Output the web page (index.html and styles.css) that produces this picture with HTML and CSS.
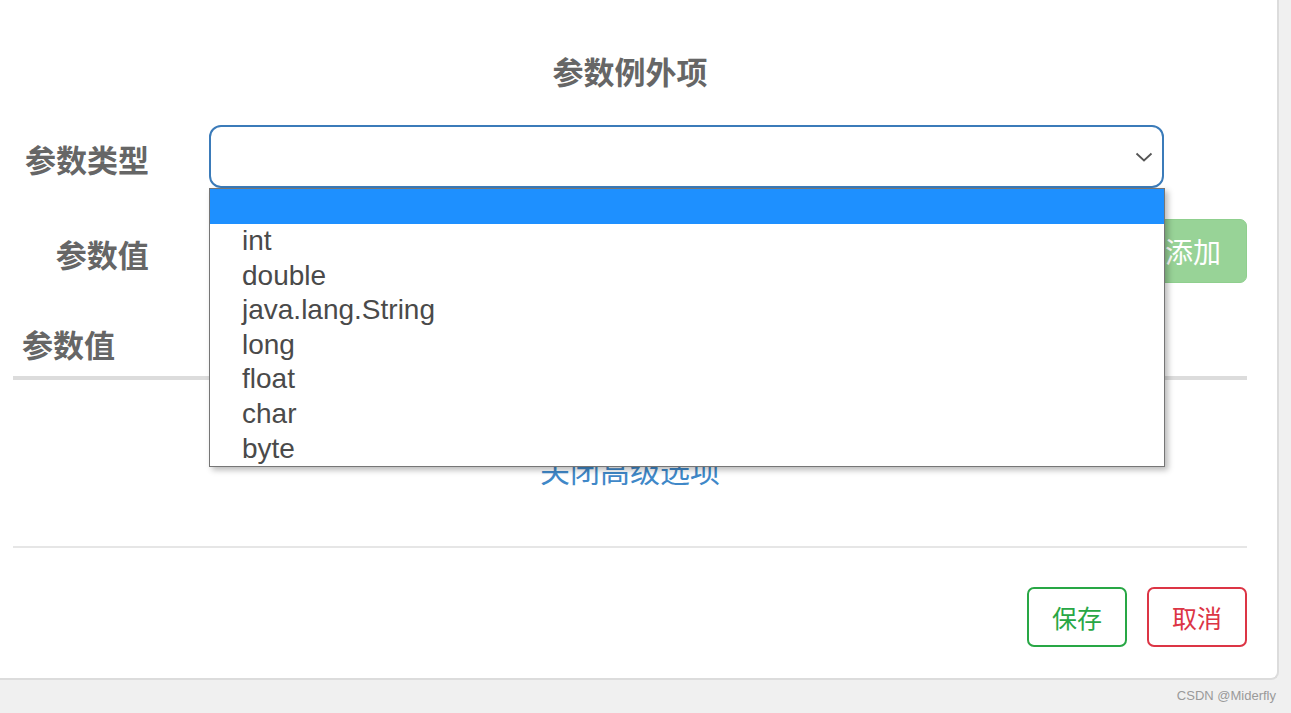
FILE: index.html
```html
<!DOCTYPE html>
<html lang="zh">
<head>
<meta charset="utf-8">
<title>参数例外项</title>
<link rel="stylesheet" href="styles.css">
</head>
<body>
<div class="page">
  <div class="panel">
    <h2 class="title">参数例外项</h2>

    <div class="row row-type">
      <label class="label">参数类型</label>
      <div class="select-wrap">
        <div class="select">
          <svg class="chevron" width="18" height="12" viewBox="0 0 18 12"><path d="M1.5 2.5 L9 9.5 L16.5 2.5" fill="none" stroke="#555" stroke-width="1.8"/></svg>
        </div>
        <ul class="options">
          <li class="opt selected">&nbsp;</li>
          <li class="opt">int</li>
          <li class="opt">double</li>
          <li class="opt">java.lang.String</li>
          <li class="opt">long</li>
          <li class="opt">float</li>
          <li class="opt">char</li>
          <li class="opt">byte</li>
        </ul>
      </div>
    </div>

    <div class="row row-value">
      <label class="label label-value">参数值</label>
      <div class="input"></div>
      <button class="btn-add">添加</button>
    </div>

    <h3 class="section">参数值</h3>

    <div class="link-row"><a class="link">关闭高级选项</a></div>

    <div class="divider"></div>

    <div class="actions">
      <button class="btn btn-save">保存</button>
      <button class="btn btn-cancel">取消</button>
    </div>
  </div>
  <div class="watermark">CSDN @Miderfly</div>
</div>
</body>
</html>
```

FILE: styles.css
```css
* { box-sizing: border-box; }
html, body { margin: 0; padding: 0; }
body {
  background: #f0f0f0;
  font-family: "Liberation Sans", "Noto Sans CJK SC", Arial, sans-serif;
  width: 1291px;
  height: 713px;
  overflow: hidden;
}
.page { width: 1291px; }
.panel {
  width: 1279px;
  height: 680px;
  background: #fff;
  border-right: 2px solid #dcdcdc;
  border-bottom: 2px solid #dcdcdc;
  border-bottom-right-radius: 8px;
  padding: 0 30px 0 13px;
}
.title {
  margin: 0;
  padding-top: 51px;
  font-size: 31px;
  line-height: 40px;
  font-weight: bold;
  color: #666;
  text-align: center;
  font-family: "Noto Sans CJK SC", sans-serif;
}
.row {
  display: flex;
  align-items: center;
}
.row-type { margin-top: 34px; height: 63px; }
.row-value { margin-top: 31px; height: 64px; }
.label {
  width: 136px;
  text-align: right;
  font-family: "Noto Sans CJK SC", sans-serif;
  font-size: 31px;
  line-height: 40px;
  font-weight: bold;
  color: #666;
  margin-right: 60px;
  margin-top: 5px;
}
.label-value { margin-top: 6px; }
.select-wrap {
  position: relative;
  width: 955px;
  height: 63px;
}
.select {
  height: 63px;
  border: 2px solid #3b7bb9;
  border-radius: 12px;
  background: #fff;
  display: flex;
  align-items: center;
  justify-content: flex-end;
  padding-right: 9px;
}
.chevron { margin-top: 1px; }
.options {
  position: absolute;
  left: 0;
  top: 63px;
  width: 956px;
  margin: 0;
  padding: 0;
  list-style: none;
  background: #fff;
  border: 1px solid #767676;
  box-shadow: 3px 3px 6px rgba(0,0,0,0.28);
  z-index: 10;
}
.opt {
  height: 34.6px;
  line-height: 33.6px;
  padding-left: 32px;
  font-size: 28px;
  color: #4a4a4a;
  font-family: "Liberation Sans", Arial, sans-serif;
}
.opt.selected { background: #1e90ff; height: 35px; }
.input {
  width: 931px;
  height: 64px;
  border: 2px solid #ccc;
  border-radius: 12px;
}
.btn-add {
  width: 108px;
  height: 64px;
  border: 1px solid #8fcf8e;
  border-radius: 7px;
  background: #98d397;
  color: #fff;
  font-family: "Noto Sans CJK SC", sans-serif;
  font-size: 28px;
  padding: 0;
  margin-left: 1px;
}
.section {
  margin: 41px 0 0;
  padding: 0 0 12px 9px;
  font-family: "Noto Sans CJK SC", sans-serif;
  font-size: 31px;
  line-height: 40px;
  font-weight: bold;
  color: #666;
  border-bottom: 4px solid #dcdcdc;
  width: 1234px;
}
.link-row {
  margin-top: 69px;
  text-align: center;
  width: 1234px;
  height: 40px;
}
.link {
  font-family: "Noto Sans CJK SC", sans-serif;
  font-size: 30px;
  line-height: 40px;
  color: #3f88c8;
}
.divider {
  margin-top: 57px;
  width: 1234px;
  height: 2px;
  background: #e6e6e6;
}
.actions {
  margin-top: 39px;
  width: 1234px;
  display: flex;
  justify-content: flex-end;
  gap: 20px;
}
.btn {
  width: 100px;
  height: 60px;
  background: #fff;
  border-radius: 7px;
  font-family: "Noto Sans CJK SC", sans-serif;
  font-size: 25px;
  padding: 0;
}
.btn-save { border: 2px solid #28a745; color: #28a745; }
.btn-cancel { border: 2px solid #dc3545; color: #dc3545; }
.watermark {
  width: 1276px;
  text-align: right;
  font-size: 13px;
  line-height: 16px;
  margin-top: 8px;
  color: #9a9a9a;
  font-family: "Liberation Sans", Arial, sans-serif;
}
```
